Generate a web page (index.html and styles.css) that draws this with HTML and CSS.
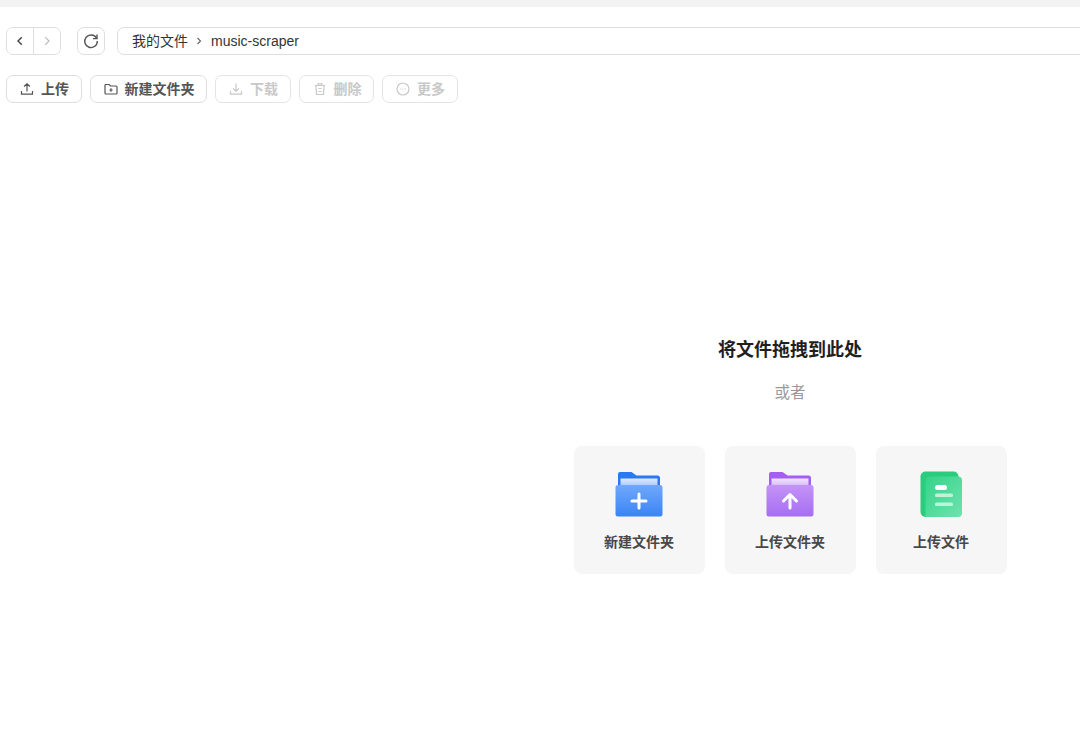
FILE: index.html
```html
<!DOCTYPE html>
<html lang="zh-CN">
<head>
<meta charset="utf-8">
<title>我的文件</title>
<link rel="stylesheet" href="styles.css">
</head>
<body>
<div class="topstrip"></div>
<nav class="navrow">
  <div class="navpair">
    <button class="navbtn"><svg width="14" height="14" viewBox="0 0 14 14"><path d="M8.800 3.200 5 7l3.800 3.800" fill="none" stroke="#444" stroke-width="1.400"/></svg></button>
    <button class="navbtn navbtn-next"><svg width="14" height="14" viewBox="0 0 14 14"><path d="M5.200 3.200 9 7l-3.800 3.800" fill="none" stroke="#bbb" stroke-width="1.200"/></svg></button>
  </div>
  <button class="refresh"><svg width="18" height="18" viewBox="0 0 18 18"><path d="M14.500 6.200A6.300 6.300 0 1 0 15.300 9" fill="none" stroke="#555" stroke-width="1.400"/><path d="M15 2.600v4h-4" fill="none" stroke="#555" stroke-width="1.400"/></svg></button>
  <div class="address">
    <span class="crumb-cjk">我的文件</span>
    <svg class="crumbsep" width="10" height="10" viewBox="0 0 10 10"><path d="M3.500 2 6.500 5l-3 3" fill="none" stroke="#666" stroke-width="1.100"/></svg>
    <span>music-scraper</span>
  </div>
</nav>
<div class="toolbar">
  <button class="tool tool-upload"><svg width="16" height="16" viewBox="0 0 16 16"><path d="M2.500 10v3.200h11V10M8 10.500V3M5 5.500 8 2.700l3 2.800" fill="none" stroke="#555" stroke-width="1.200"/></svg><span>上传</span></button>
  <button class="tool tool-new"><svg width="16" height="16" viewBox="0 0 16 16"><path d="M2 4.500a1 1 0 0 1 1-1h3.200l1.300 1.500H13a1 1 0 0 1 1 1v6a1 1 0 0 1-1 1H3a1 1 0 0 1-1-1zM8 7.300v3.400M6.300 9h3.400" fill="none" stroke="#555" stroke-width="1.200"/></svg><span>新建文件夹</span></button>
  <button class="tool tool-off tool-down"><svg width="16" height="16" viewBox="0 0 16 16"><path d="M2.500 10v3.200h11V10M8 2.500V10M5 7.500l3 2.800 3-2.800" fill="none" stroke="#c8c8c8" stroke-width="1.200"/></svg><span>下载</span></button>
  <button class="tool tool-off tool-del"><svg width="16" height="16" viewBox="0 0 16 16"><path d="M2.800 4.500h10.400M6 4.500V2.800h4v1.700M3.900 4.500l.6 9h7l.6-9M6.500 7.500h3M6.500 10.500h3" fill="none" stroke="#c8c8c8" stroke-width="1.200"/></svg><span>删除</span></button>
  <button class="tool tool-off tool-more"><svg width="16" height="16" viewBox="0 0 16 16"><circle cx="8" cy="8" r="6" fill="none" stroke="#c8c8c8" stroke-width="1.200"/><path d="M5.200 8h1M7.500 8h1M9.800 8h1" stroke="#c8c8c8" stroke-width="1.100"/></svg><span>更多</span></button>
</div>
<main class="empty">
  <h2 class="title">将文件拖拽到此处</h2>
  <p class="or">或者</p>
  <div class="cards">
    <div class="card">
      <svg class="cardicon" width="48" height="46" viewBox="0 0 48 46">
        <defs><linearGradient id="b" x1="0" y1="0" x2="0" y2="1"><stop offset="0" stop-color="#70a8fb"/><stop offset="1" stop-color="#3a84f6"/></linearGradient><linearGradient id="bi" x1="0" y1="0" x2="0" y2="1"><stop offset="0" stop-color="#dfeafd"/><stop offset="1" stop-color="#a5c6fa"/></linearGradient></defs>
        <path d="M1.500 3a2 2 0 0 1 2-2h11.500l5 3.500h21a2.500 2.500 0 0 1 2.500 2.500v10H1.500z" fill="#2b78f0" transform="translate(1.500 0)"/>
        <rect x="5.500" y="7.500" width="37" height="8" fill="url(#bi)"/>
        <path d="M0.500 16.500a2.500 2.500 0 0 1 2.500-2.500h42a2.500 2.500 0 0 1 2.500 2.500v26.500a2.500 2.500 0 0 1-2.500 2.500H3a2.500 2.500 0 0 1-2.500-2.500z" fill="url(#b)"/>
        <path d="M24 23v14M17 30h14" stroke="#fff" stroke-width="3" stroke-linecap="round"/>
      </svg>
      <span class="cardlabel">新建文件夹</span>
    </div>
    <div class="card">
      <svg class="cardicon" width="48" height="46" viewBox="0 0 48 46">
        <defs><linearGradient id="p" x1="0" y1="0" x2="0" y2="1"><stop offset="0" stop-color="#c493f7"/><stop offset="1" stop-color="#a56ef2"/></linearGradient><linearGradient id="pi" x1="0" y1="0" x2="0" y2="1"><stop offset="0" stop-color="#f0e4fd"/><stop offset="1" stop-color="#d4b6f9"/></linearGradient></defs>
        <path d="M1.500 3a2 2 0 0 1 2-2h11.500l5 3.500h21a2.500 2.500 0 0 1 2.500 2.500v10H1.500z" fill="#a35fef" transform="translate(1.500 0)"/>
        <rect x="5.500" y="7.500" width="37" height="8" fill="url(#pi)"/>
        <path d="M0.500 16.500a2.500 2.500 0 0 1 2.500-2.500h42a2.500 2.500 0 0 1 2.500 2.500v26.500a2.500 2.500 0 0 1-2.500 2.500H3a2.500 2.500 0 0 1-2.500-2.500z" fill="url(#p)"/>
        <path d="M24 37V24M17.500 30l6.500-6.500 6.500 6.500" fill="none" stroke="#fff" stroke-width="3" stroke-linecap="round" stroke-linejoin="round"/>
      </svg>
      <span class="cardlabel">上传文件夹</span>
    </div>
    <div class="card">
      <svg class="cardicon" width="48" height="46" viewBox="0 0 48 46">
        <defs><linearGradient id="g" x1="0" y1="0" x2="1" y2="1"><stop offset="0" stop-color="#35d489"/><stop offset="1" stop-color="#6fe2ae"/></linearGradient></defs>
        <rect x="3.500" y="0.500" width="38" height="45.500" rx="5" fill="#2bcc7e"/>
        <path d="M13.500 5.500H41a4 4 0 0 1 4 4V42a4 4 0 0 1-4 4H8.500V10.500a5 5 0 0 1 5-5z" fill="url(#g)"/>
        <rect x="18" y="14" width="12" height="5" rx="2.500" fill="#fff"/>
        <rect x="18" y="22.500" width="18" height="3.500" rx="1.500" fill="#c0f2d9"/>
        <rect x="18" y="31.500" width="18" height="3.500" rx="1.500" fill="#c0f2d9"/>
      </svg>
      <span class="cardlabel">上传文件</span>
    </div>
  </div>
</main>
</body>
</html>
```
FILE: styles.css
```css
* { box-sizing: border-box; }
html, body { margin: 0; padding: 0; height: 100%; overflow: hidden; background: #fff; }
body { font-family: "Liberation Sans", "Noto Sans CJK SC", sans-serif; color: #333; }
button { font-family: inherit; padding: 0; background: #fff; }
.topstrip { height: 7px; background: #f3f3f3; }
.navrow { display: flex; align-items: center; margin-top: 20px; padding-left: 6px; height: 28px; }
.navpair { flex: none; display: flex; width: 55px; height: 28px; border: 1px solid #dedede; border-radius: 7px; overflow: hidden; }
.navbtn { flex: 1; border: 0; display: flex; align-items: center; justify-content: center; }
.navbtn-next { border-left: 1px solid #dedede; }
.refresh { flex: none; width: 28px; height: 28px; margin-left: 16px; border: 1px solid #dedede; border-radius: 7px; display: flex; align-items: center; justify-content: center; }
.address { flex: none; width: 1000px; height: 28px; margin-left: 12px; padding-left: 14px; border: 1px solid #dedede; border-radius: 7px; display: flex; align-items: center; font-size: 14px; color: #333; }
.crumb-cjk { padding-bottom: 2px; }
.crumbsep { margin: 0 7px 0 6px; }
.toolbar { display: flex; gap: 8px; margin-top: 20px; padding-left: 6px; }
.tool { flex: none; height: 28px; border: 1px solid #dedede; border-radius: 7px; display: flex; align-items: center; justify-content: center; gap: 6px; font-size: 14px; font-weight: 700; color: #555; }
.tool span { padding-bottom: 2px; }
.tool-upload { width: 76px; }
.tool-new { width: 117px; }
.tool-down { width: 76px; }
.tool-del { width: 75px; }
.tool-more { width: 76px; }
.tool-off { color: #c8c8c8; border-color: #e4e4e4; }
.empty { margin-left: 500px; display: flex; flex-direction: column; align-items: center; padding-top: 233px; }
.title { margin: 0; font-size: 18px; line-height: 28px; font-weight: 700; color: #1f1f1f; }
.or { margin: 15px 0 0; font-size: 15.500px; line-height: 28px; color: #999; }
.cards { display: flex; gap: 20px; margin-top: 39px; }
.card { width: 131px; height: 128px; background: #f6f6f6; border-radius: 8px; display: flex; flex-direction: column; align-items: center; padding-top: 25px; }
.cardicon { flex: none; }
.cardlabel { margin-top: 15px; font-size: 14px; line-height: 20px; font-weight: 700; color: #484848; }
```
